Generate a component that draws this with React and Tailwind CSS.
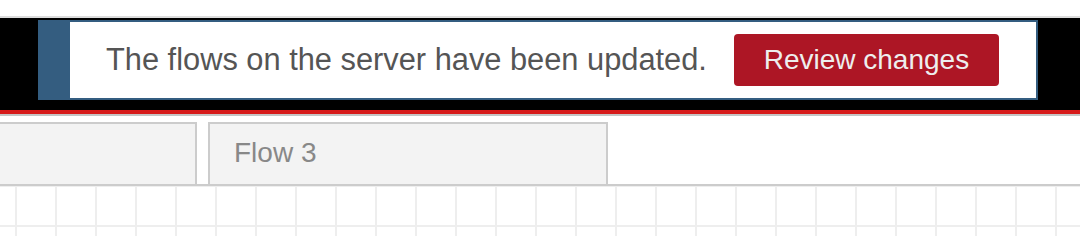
export default function App() {
  return (
    <div className="w-[1080px] h-[236px] overflow-hidden bg-white font-['Liberation_Sans',Arial,sans-serif]">
      {/* top strip */}
      <div className="h-[16px] bg-white" />
      <div className="h-[2px] bg-[#dddddd]" />

      {/* header with notification */}
      <div className="h-[92px] bg-black pl-[38px] pt-[2px]">
        <div className="flex w-[1000px] h-[80px] border-2 border-[#345d80] bg-white">
          <div className="w-[30px] bg-[#345d80]" />
          <div className="flex flex-1 items-center pl-[36px]">
            <span className="text-[30.8px] text-[#555555]">
              The flows on the server have been updated.
            </span>
            <button className="ml-[27px] h-[52px] w-[265px] rounded-[4px] bg-[#ad1625] text-[28px] text-[#eeeeee]">
              Review changes
            </button>
          </div>
        </div>
      </div>
      <div className="h-[4px] bg-[#d61a1a]" />
      <div className="h-[2px] bg-[#c4c4c4]" />

      {/* tabs */}
      <div className="flex h-[70px] items-end gap-[11px] border-b-2 border-[#cccccc] pt-[6px]">
        <div className="ml-[-203px] h-[62px] w-[400px] border-2 border-b-0 border-[#cccccc] bg-[#f3f3f3]" />
        <div className="flex h-[62px] w-[400px] items-center border-2 border-b-0 border-[#cccccc] bg-[#f3f3f3] pl-[24px] pb-[2px]">
          <span className="text-[28px] text-[#888888]">Flow 3</span>
        </div>
      </div>

      {/* workspace grid */}
      <div className="h-[60px] bg-white bg-[linear-gradient(to_right,#eeeeee_2px,transparent_2px),linear-gradient(to_bottom,#eeeeee_2px,transparent_2px)] bg-[size:40px_40px] bg-[position:15px_39px]" />
    </div>
  );
}
